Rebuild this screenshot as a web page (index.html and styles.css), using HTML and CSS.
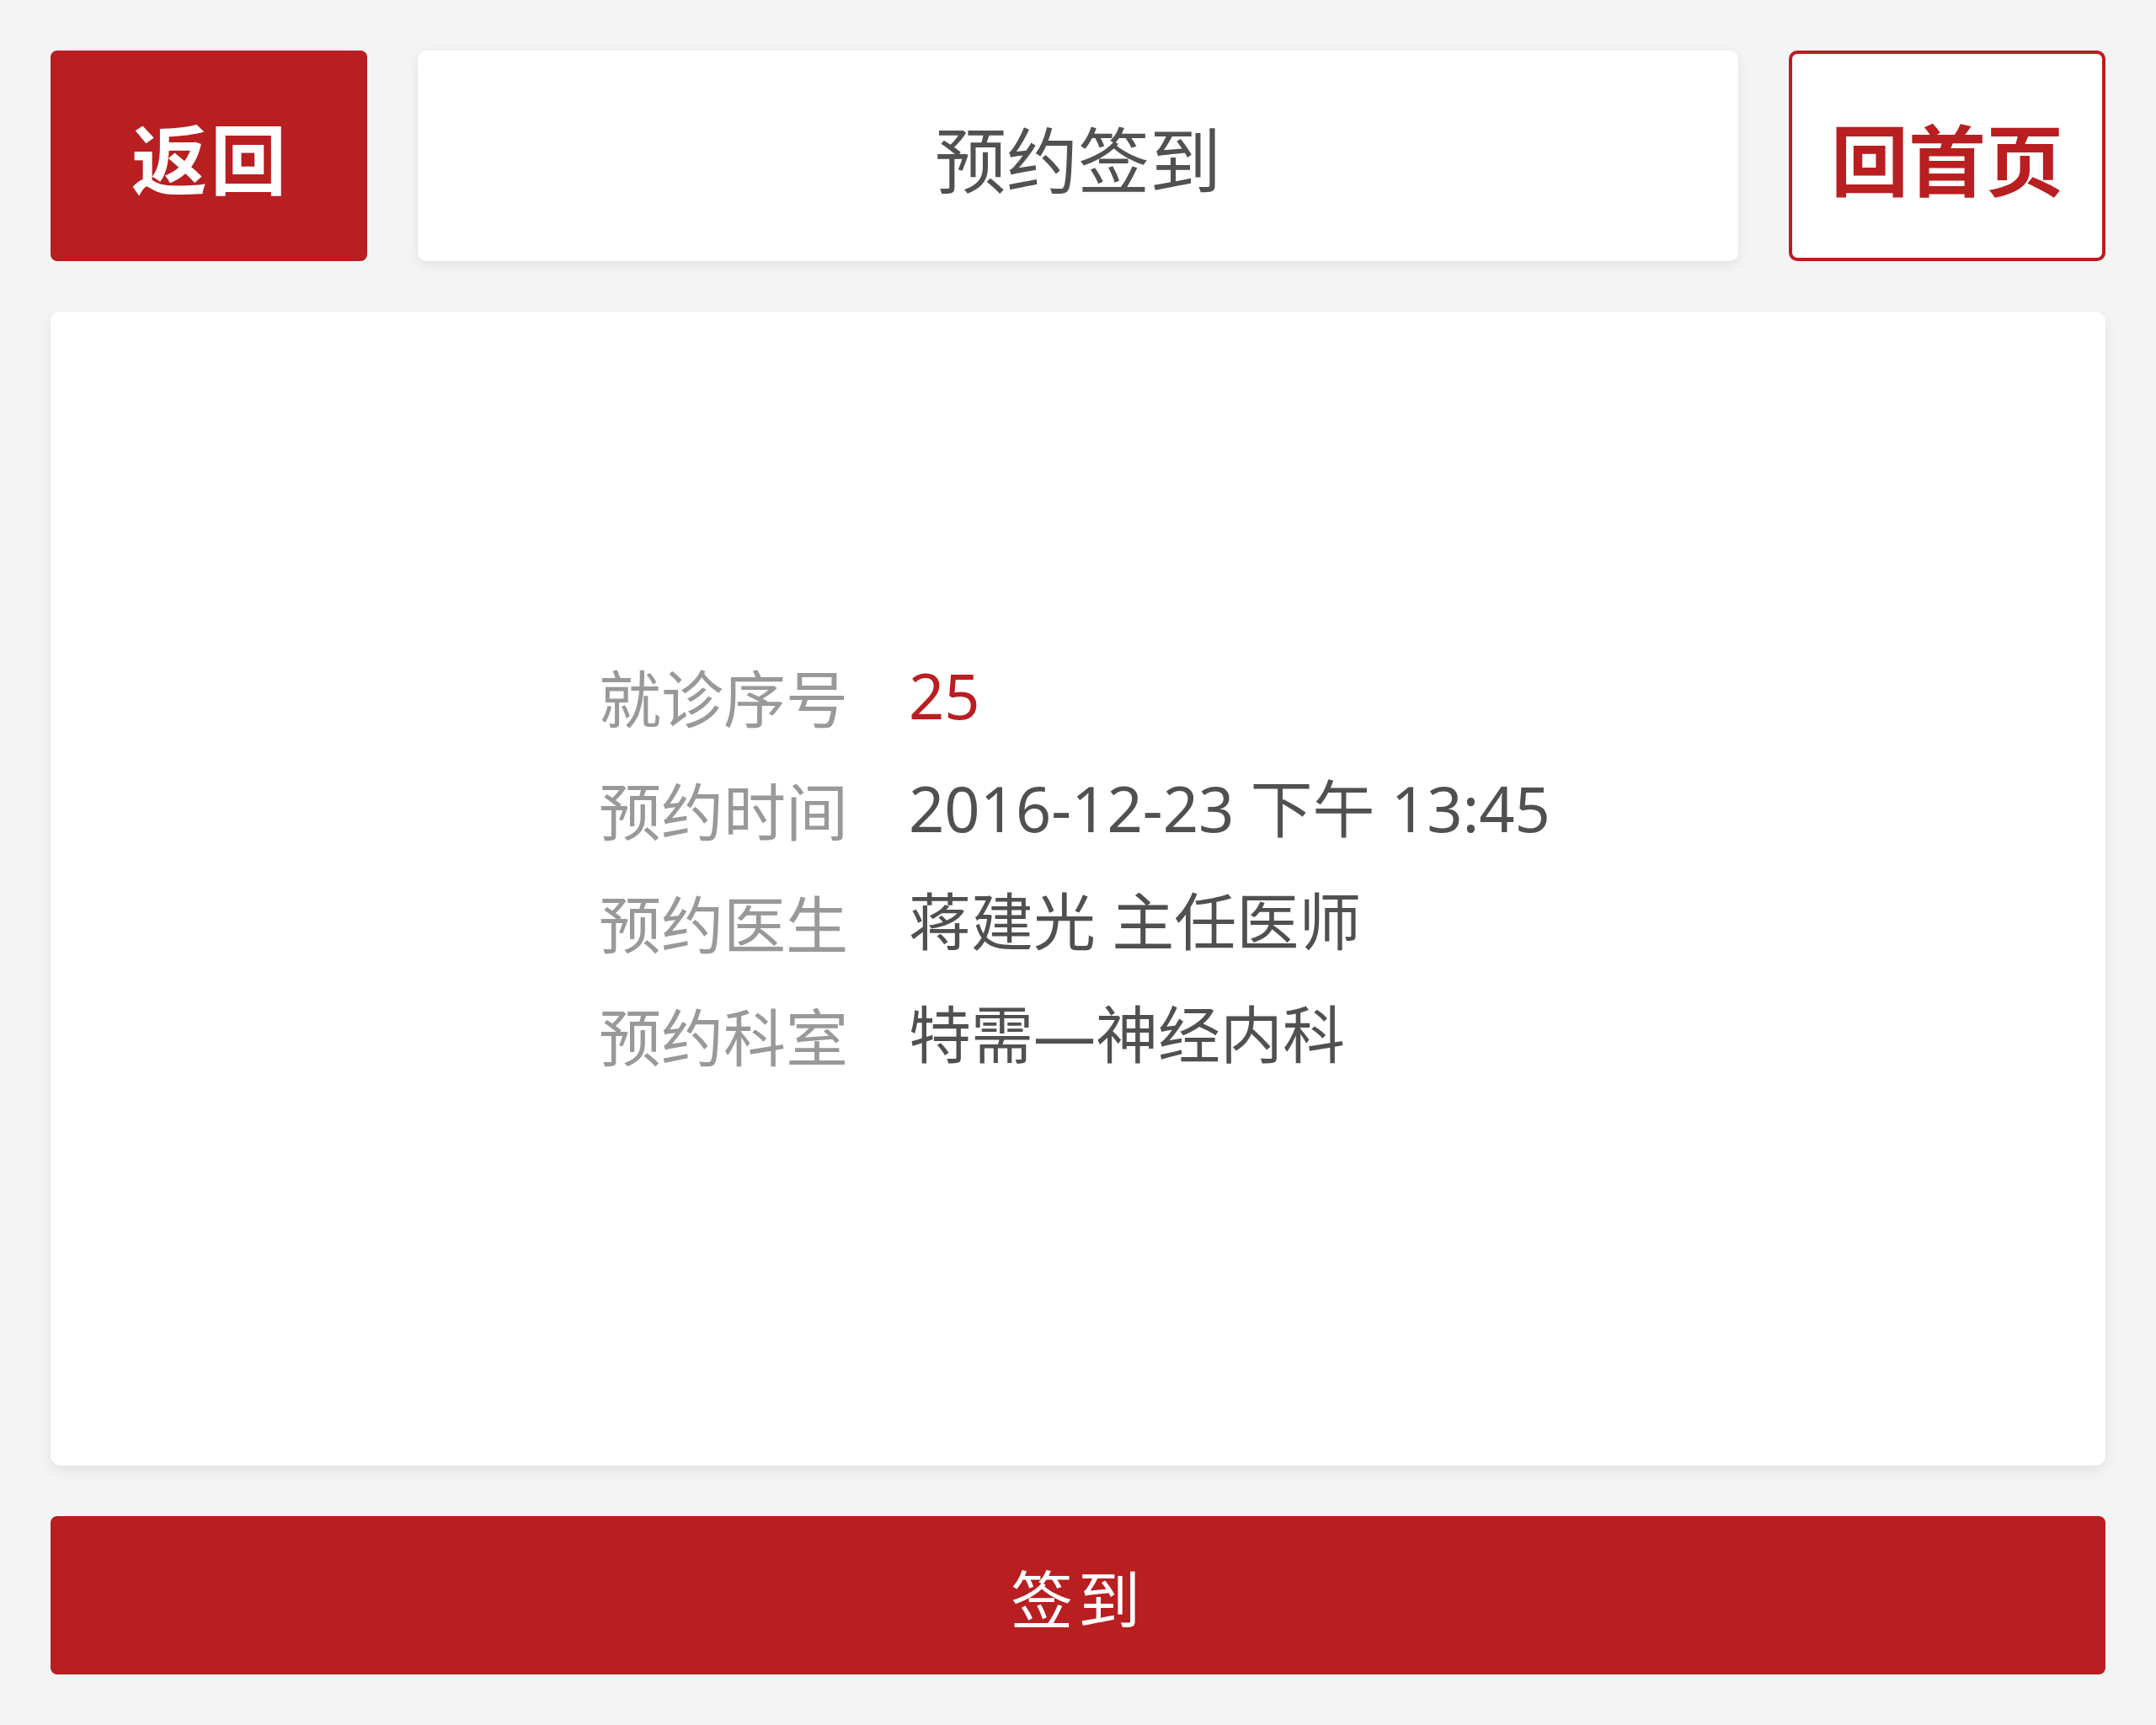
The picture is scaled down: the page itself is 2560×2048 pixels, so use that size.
FILE: index.html
```html
<!DOCTYPE html>
<html lang="zh-CN">
<head>
<meta charset="utf-8">
<title>预约签到</title>
<link rel="stylesheet" href="styles.css">
</head>
<body>
<div class="page">
  <header class="topbar">
    <button class="btn-back">返回</button>
    <div class="title-box">预约签到</div>
    <button class="btn-home">回首页</button>
  </header>
  <main class="card">
    <div class="info">
      <div class="label">就诊序号</div><div class="value red">25</div>
      <div class="label">预约时间</div><div class="value">2016-12-23 下午 13:45</div>
      <div class="label">预约医生</div><div class="value">蒋建光 主任医师</div>
      <div class="label">预约科室</div><div class="value">特需—神经内科</div>
    </div>
  </main>
  <button class="btn-sign">签到</button>
</div>
</body>
</html>
```
FILE: styles.css
```css
* { box-sizing: border-box; }
html, body {
  margin: 0;
  padding: 0;
  background: #f4f4f4;
}
body {
  font-family: "Noto Sans CJK SC", "Noto Sans", sans-serif;
}
.page {
  width: 2560px;
  height: 2048px;
  padding: 60px;
  display: flex;
  flex-direction: column;
  gap: 60px;
}
.topbar {
  display: flex;
  gap: 60px;
  height: 250px;
  flex: none;
}
button {
  font-family: inherit;
  cursor: pointer;
  padding: 0;
}
.btn-back {
  width: 376px;
  background: #b91e20;
  color: #fff;
  border: none;
  border-radius: 8px;
  font-size: 90px;
  font-weight: 700;
  letter-spacing: 4px;
  text-indent: 4px;
}
.title-box {
  flex: 1;
  background: #fff;
  border-radius: 10px;
  box-shadow: 0 4px 14px rgba(0,0,0,0.08);
  display: flex;
  align-items: center;
  justify-content: center;
  font-size: 85px;
  color: #515151;
}
.btn-home {
  width: 376px;
  background: #fff;
  color: #b91e20;
  border: 4px solid #b91e20;
  border-radius: 10px;
  font-size: 92px;
  font-weight: 700;
}
.card {
  flex: 1;
  background: #fff;
  border-radius: 12px;
  box-shadow: 0 6px 16px rgba(0,0,0,0.08);
  display: flex;
  align-items: center;
  justify-content: center;
  padding-bottom: 56px;
  padding-right: 8px;
}
.info {
  display: grid;
  grid-template-columns: auto auto;
  grid-auto-rows: 134px;
  column-gap: 72px;
  align-items: center;
  line-height: 1.2;
}
.label {
  color: #999;
  font-size: 74px;
}
.value {
  color: #505050;
  font-size: 74px;
  font-family: "Noto Sans", "Noto Sans CJK SC", sans-serif;
}
.value.red { color: #b91e20; }
.btn-sign {
  flex: none;
  height: 188px;
  background: #b91e20;
  color: #fff;
  border: none;
  border-radius: 8px;
  font-size: 74px;
  letter-spacing: 6px;
}
```
